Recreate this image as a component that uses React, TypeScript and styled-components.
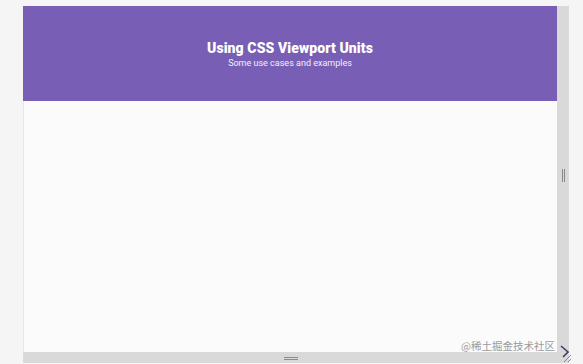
import React from "react";
import styled, { createGlobalStyle } from "styled-components";

const Global = createGlobalStyle`
  html, body { margin: 0; padding: 0; background: #f5f5f5; }
  body { font-family: "Inter", "Roboto", sans-serif; }
`;

const Page = styled.div`
  position: relative;
  width: 583px;
  height: 364px;
  padding: 6px 0 0 23px;
  box-sizing: border-box;
  overflow: hidden;
`;

const Frame = styled.div`
  display: grid;
  grid-template-columns: 534px 12px;
  grid-template-rows: 346px 11px;
  width: 546px;
`;

const Viewport = styled.div`
  display: flex;
  flex-direction: column;
  background: #fbfbfb;
  border-left: 1px solid #e6e6e6;
  box-sizing: border-box;
`;

const Header = styled.header`
  height: 95px;
  background: #785fb5;
  display: flex;
  flex-direction: column;
  align-items: center;
  justify-content: center;
  gap: 2px;
  color: #fff;
  margin-left: -1px;
  padding-top: 2px;
  box-sizing: border-box;
`;

const Title = styled.h1`
  margin: 0;
  font-family: "Roboto", sans-serif;
  font-weight: 900;
  font-size: 14px;
  line-height: 16px;
  letter-spacing: 0.1px;
`;

const Subtitle = styled.p`
  margin: 0;
  font-family: "Roboto", sans-serif;
  font-size: 9px;
  line-height: 11px;
  color: #f2eefa;
`;

const Body = styled.main`
  flex: 1;
`;

const SideBar = styled.div`
  background: #d9d9d9;
  display: flex;
  align-items: center;
  justify-content: center;
  padding-bottom: 8px;
`;

const BottomBar = styled.div`
  background: #d9d9d9;
  display: flex;
  align-items: center;
  justify-content: center;
  padding-left: 1px;
`;

const Corner = styled.div`
  background: #d9d9d9;
`;

const VGrip = styled.div`
  width: 3px;
  height: 13px;
  border-left: 1px solid #888;
  border-right: 1px solid #888;
  box-sizing: border-box;
  margin-left: 1px;
`;

const HGrip = styled.div`
  width: 14px;
  height: 3px;
  border-top: 1px solid #8c8c8c;
  border-bottom: 1px solid #8c8c8c;
  box-sizing: border-box;
  margin-top: 1px;
`;

const Watermark = styled.div`
  position: absolute;
  right: 28px;
  top: 338px;
  font-family: "Noto Sans CJK SC", sans-serif;
  font-size: 10.5px;
  line-height: 15px;
  color: #9a9a9a;
  letter-spacing: 0;
`;

const ResizeIcon = styled.svg`
  position: absolute;
  left: 559px;
  top: 345px;
`;

export default function App() {
  return (
    <>
      <Global />
      <Page>
        <Frame>
          <Viewport>
            <Header>
              <Title>Using CSS Viewport Units</Title>
              <Subtitle>Some use cases and examples</Subtitle>
            </Header>
            <Body />
          </Viewport>
          <SideBar>
            <VGrip />
          </SideBar>
          <BottomBar>
            <HGrip />
          </BottomBar>
          <Corner />
        </Frame>
        <Watermark>@稀土掘金技术社区</Watermark>
        <ResizeIcon width="14" height="18" viewBox="0 0 14 18">
          <path d="M2 1 L9 7 L4 12" stroke="#3d3a6b" strokeWidth="1.6" fill="none" />
          <path d="M5 17 L12 10 M9 17 L12 14" stroke="#888" strokeWidth="1" fill="none" />
        </ResizeIcon>
      </Page>
    </>
  );
}
